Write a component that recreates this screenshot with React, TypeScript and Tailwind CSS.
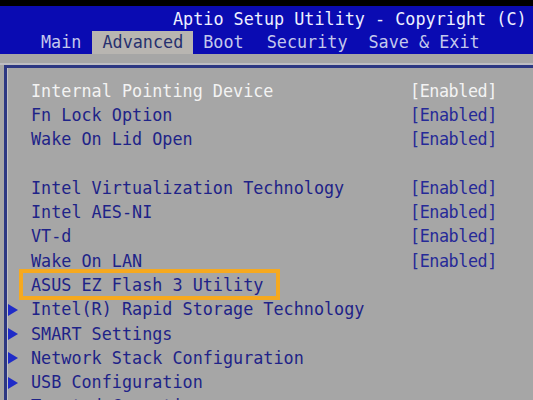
type Row = { label?: string; value?: string; white?: boolean; sub?: boolean; focus?: boolean }

const rows: Row[] = [
  { label: 'Internal Pointing Device', value: '[Enabled]', white: true },
  { label: 'Fn Lock Option', value: '[Enabled]' },
  { label: 'Wake On Lid Open', value: '[Enabled]' },
  {},
  { label: 'Intel Virtualization Technology', value: '[Enabled]' },
  { label: 'Intel AES-NI', value: '[Enabled]' },
  { label: 'VT-d', value: '[Enabled]' },
  { label: 'Wake On LAN', value: '[Enabled]' },
  { label: 'ASUS EZ Flash 3 Utility', focus: true },
  { label: 'Intel(R) Rapid Storage Technology', sub: true },
  { label: 'SMART Settings', sub: true },
  { label: 'Network Stack Configuration', sub: true },
  { label: 'USB Configuration', sub: true },
  { label: 'Trusted Computing', sub: true },
]

function Arrow() {
  return (
    <svg width="10" height="12" viewBox="0 0 10 12">
      <path d="M0 0 L10 6 L0 12 Z" fill="#1f2bc8" />
    </svg>
  )
}

export default function App() {
  return (
    <div className="w-[533px] h-[400px] overflow-hidden bg-[#a6a6a6] font-['DejaVu_Sans_Mono',monospace] text-[16.8px] whitespace-pre">
      <div className="h-[6px] bg-black" />
      <div className="h-[48px] bg-[#0a0bb2] flex flex-col">
        <div className="h-[25px] pt-[3px] pl-[173px] flex items-center text-[#eef0ff]">
          Aptio Setup Utility - Copyright (C)
        </div>
        <div className="h-[23px] flex items-stretch pl-[41px] text-[#c4c8ec]">
          <span className="flex items-center">Main</span>
          <span className="ml-[11px] px-[10px] flex items-center bg-[#b8b5b1] text-[#26306e]">Advanced</span>
          <span className="ml-[10px] flex items-center">Boot</span>
          <span className="ml-[23px] flex items-center">Security</span>
          <span className="ml-[21px] flex items-center">Save &amp; Exit</span>
        </div>
      </div>
      <div className="h-[9px]" />
      <div className="h-[2px] bg-[#bdbdc2]" />
      <div className="ml-[4px] border-l-[3px] border-t-[3px] border-[#2c3782] h-[340px]">
        <div className="h-full border-l border-[#c2c2c6] flex flex-col pt-[11px]">
          {rows.map((r, i) => (
            <div key={i} className="relative h-[24.3px] shrink-0 flex items-center">
              <div className="w-[23px] flex items-center">{r.sub && <Arrow />}</div>
              <div className={`w-[379px] ${r.white ? 'text-[#f3f3f3]' : 'text-[#1e2388]'}`}>{r.label}</div>
              {r.value && (
                <div className={`tracking-[-0.45px] ${r.white ? 'text-[#f3f3f3]' : 'text-[#262a98]'}`}>{r.value}</div>
              )}
              {r.focus && (
                <span className="absolute left-[11px] top-[-4px] w-[261px] h-[31px] border-[4px] border-[#f6a91f]" />
              )}
            </div>
          ))}
        </div>
      </div>
    </div>
  )
}
